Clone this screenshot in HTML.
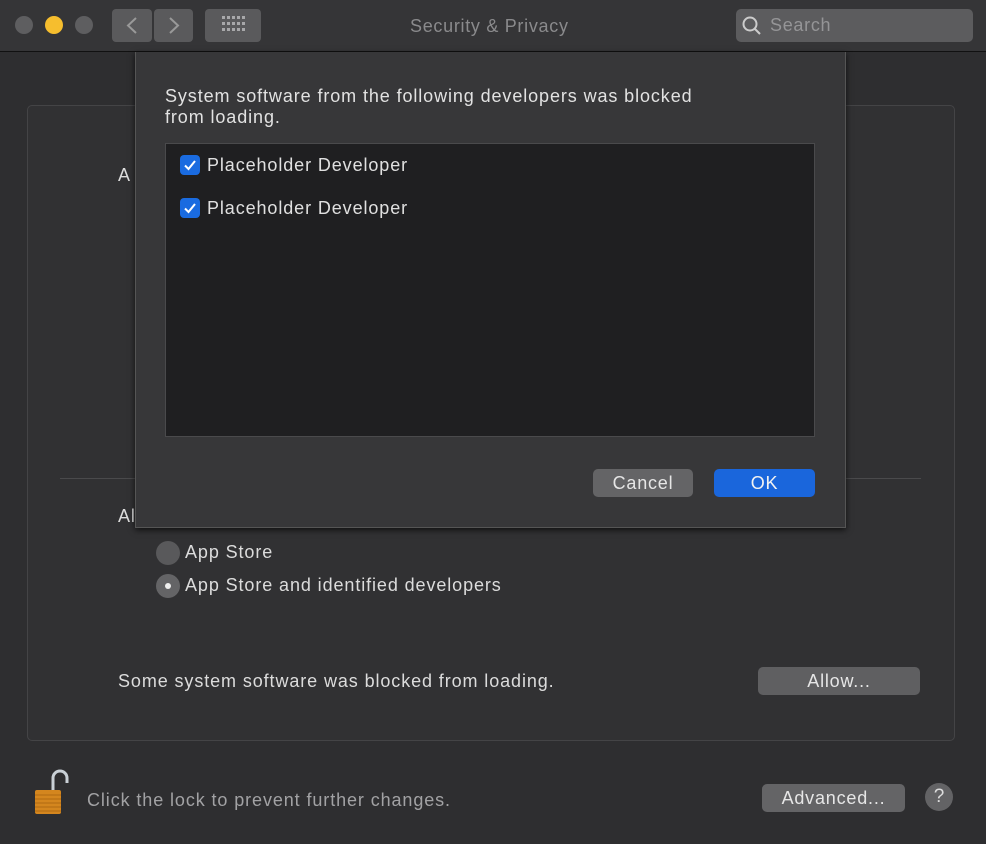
<!DOCTYPE html>
<html><head><meta charset="utf-8"><style>
*{margin:0;padding:0;box-sizing:border-box}
body{width:986px;height:844px;overflow:hidden;background:#2e2e30;font-family:"Liberation Sans",sans-serif;position:relative;color:#dcdcdc}
.abs{position:absolute}
.tb{left:0;top:0;width:986px;height:52px;background:#353537;border-bottom:1px solid #111}
.dot{width:18px;height:18px;border-radius:50%;top:16px;background:#5e5e60}
.btn{background:#5a5a5c;border-radius:4px}
.t{font-size:18px;letter-spacing:0.9px;white-space:nowrap}
.panel{left:27px;top:105px;width:928px;height:636px;border:1px solid #444446;border-radius:5px;background:#313133}
.sheet{left:135px;top:52px;width:711px;height:476px;background:#373739;border:1px solid #555;border-top:none;box-shadow:0 2px 6px rgba(0,0,0,.7)}
.list{left:165px;top:143px;width:650px;height:294px;background:#1f1f21;border:1px solid #4a4a4c}
.cb{width:20px;height:20px;border-radius:4px;background:#1a6be0}
.pb{border-radius:5px;background:#646466;color:#e6e6e6;font-size:18px;letter-spacing:0.8px;text-align:center}
</style></head><body>
<div class="abs tb"></div>
<div class="abs dot" style="left:15px"></div>
<div class="abs dot" style="left:45px;background:#f6be2e"></div>
<div class="abs dot" style="left:75px"></div>
<div class="abs btn" style="left:112px;top:9px;width:40px;height:33px"></div>
<div class="abs btn" style="left:154px;top:9px;width:39px;height:33px"></div>
<svg class="abs" style="left:112px;top:9px" width="82" height="33"><path d="M24 9 L16 16.5 L24 24" stroke="#999" stroke-width="2" fill="none"/><path d="M58 9 L66 16.5 L58 24" stroke="#999" stroke-width="2" fill="none"/></svg>
<div class="abs btn" style="left:205px;top:9px;width:56px;height:33px"></div>
<svg class="abs" style="left:222px;top:16px" width="24" height="18" fill="#a8a8aa"><g id="r"><rect x="0" y="0" width="3" height="3"/><rect x="5" y="0" width="3" height="3"/><rect x="10" y="0" width="3" height="3"/><rect x="15" y="0" width="3" height="3"/><rect x="20" y="0" width="3" height="3"/></g><use href="#r" y="6"/><use href="#r" y="12"/></svg>
<div class="abs t" style="left:410px;top:16px;color:#8a8a8c;font-size:18px;letter-spacing:0.7px">Security &amp; Privacy</div>
<div class="abs" style="left:736px;top:9px;width:237px;height:33px;background:#5c5c5e;border-radius:5px"></div>
<svg class="abs" style="left:741px;top:14px" width="22" height="22"><circle cx="9" cy="10" r="6.5" stroke="#ccc" stroke-width="2" fill="none"/><path d="M13.5 14.5 L19 20" stroke="#ccc" stroke-width="2"/></svg>
<div class="abs t" style="left:770px;top:15px;color:#959597;letter-spacing:0.7px">Search</div>

<div class="abs panel"></div>
<div class="abs t" style="left:118px;top:165px">A</div>
<div class="abs" style="left:60px;top:478px;width:861px;height:1px;background:#4a4a4c"></div>
<div class="abs t" style="left:118px;top:506px">Al</div>
<div class="abs" style="left:156px;top:541px;width:24px;height:24px;border-radius:50%;background:#59595b"></div>
<div class="abs t" style="left:185px;top:542px">App Store</div>
<div class="abs" style="left:156px;top:574px;width:24px;height:24px;border-radius:50%;background:#646466"></div>
<div class="abs" style="left:165px;top:583px;width:6px;height:6px;border-radius:50%;background:#eee"></div>
<div class="abs t" style="left:185px;top:575px">App Store and identified developers</div>
<div class="abs t" style="left:118px;top:671px">Some system software was blocked from loading.</div>
<div class="abs pb" style="left:758px;top:667px;width:162px;height:28px;line-height:28px;background:#5f5f61">Allow...</div>

<svg class="abs" style="left:32px;top:766px" width="40" height="50"><path d="M21 24 V12 a7 7 0 0 1 14 0 V17" stroke="#c9d0d6" stroke-width="3" fill="none"/><rect x="3" y="24" width="26" height="24" rx="2" fill="#d4861e"/><g stroke="#b06a12" stroke-width="1"><path d="M3 29h26M3 33h26M3 37h26M3 41h26M3 45h26"/></g></svg>
<div class="abs t" style="left:87px;top:790px;color:#a2a2a4">Click the lock to prevent further changes.</div>
<div class="abs pb" style="left:762px;top:784px;width:143px;height:28px;line-height:28px">Advanced...</div>
<div class="abs" style="left:925px;top:783px;width:28px;height:28px;border-radius:50%;background:#636365;color:#ddd;font-size:19px;text-align:center;line-height:28px">?</div>

<div class="abs sheet"></div>
<div class="abs t" style="left:165px;top:86px;line-height:21px;color:#e2e2e2">System software from the following developers was blocked<br>from loading.</div>
<div class="abs list"></div>
<div class="abs cb" style="left:180px;top:155px"></div>
<svg class="abs" style="left:180px;top:155px" width="20" height="20"><path d="M5 10.5 L8.5 14 L15 6" stroke="#fff" stroke-width="2" fill="none"/></svg>
<div class="abs t" style="left:207px;top:155px;color:#e0e0e0">Placeholder Developer</div>
<div class="abs cb" style="left:180px;top:198px"></div>
<svg class="abs" style="left:180px;top:198px" width="20" height="20"><path d="M5 10.5 L8.5 14 L15 6" stroke="#fff" stroke-width="2" fill="none"/></svg>
<div class="abs t" style="left:207px;top:198px;color:#e0e0e0">Placeholder Developer</div>
<div class="abs pb" style="left:593px;top:469px;width:100px;height:28px;line-height:28px">Cancel</div>
<div class="abs pb" style="left:714px;top:469px;width:101px;height:28px;line-height:28px;background:#1a66dc;color:#f2f2f2">OK</div>
</body></html>
